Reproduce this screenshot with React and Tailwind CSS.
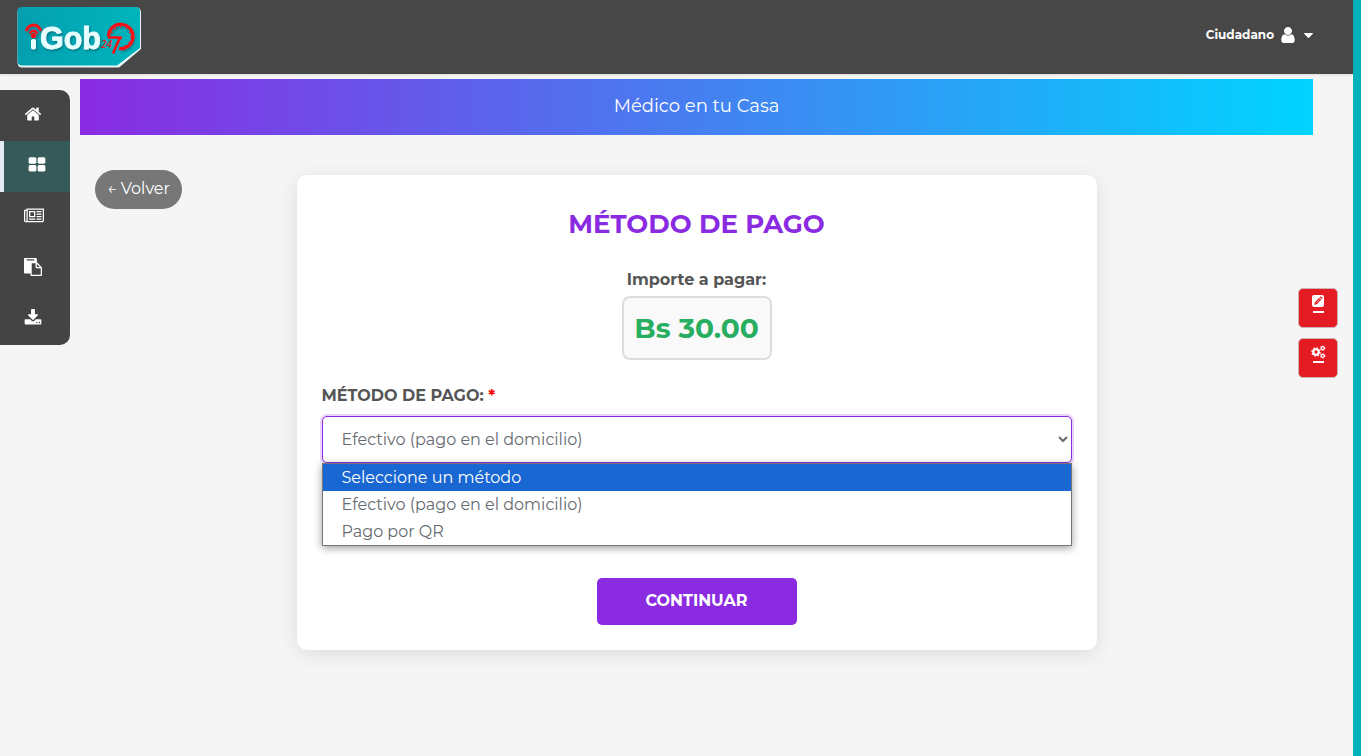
import { useState } from "react";

const NAV_ITEMS = [
  {
    label: "Inicio",
    viewBox: "0 0 1792 1792",
    size: "w-[18px] h-[18px]",
    d: "M1472 992v480q0 26-19 45t-45 19h-384v-384h-256v384h-384q-26 0-45-19t-19-45v-480q0-1 .5-3t.5-3l575-474 575 474q1 2 1 6zm223-69l-62 74q-8 9-21 11h-3q-13 0-21-7l-692-577-692 577q-12 8-24 7-13-2-21-11l-62-74q-8-10-7-23.5t11-21.5l719-599q32-26 76-26t76 26l244 204v-195q0-14 9-23t23-9h192q14 0 23 9t9 23v408l219 182q10 8 11 21.5t-7 23.5z",
  },
  {
    label: "Servicios",
    active: true,
    viewBox: "0 0 1792 1792",
    size: "w-[18px] h-[18px]",
    d: "M832 1024v384q0 52-38 90t-90 38h-512q-52 0-90-38t-38-90v-384q0-52 38-90t90-38h512q52 0 90 38t38 90zm0-768v384q0 52-38 90t-90 38h-512q-52 0-90-38t-38-90v-384q0-52 38-90t90-38h512q52 0 90 38t38 90zm896 768v384q0 52-38 90t-90 38h-512q-52 0-90-38t-38-90v-384q0-52 38-90t90-38h512q52 0 90 38t38 90zm0-768v384q0 52-38 90t-90 38h-512q-52 0-90-38t-38-90v-384q0-52 38-90t90-38h512q52 0 90 38t38 90z",
  },
  {
    label: "Noticias",
    viewBox: "0 0 2048 1792",
    size: "w-5 h-[18px]",
    d: "M1024 512h-384v384h384v-384zm128 640v128h-640v-128h640zm0-768v640h-640v-640h640zm640 768v128h-512v-128h512zm0-256v128h-512v-128h512zm0-256v128h-512v-128h512zm0-256v128h-512v-128h512zm-1536 960v-960h-128v960q0 26 19 45t45 19 45-19 19-45zm1664 0v-1088h-1536v1088q0 33-11 64h1483q26 0 45-19t19-45zm128-1216v1216q0 80-56 136t-136 56h-1664q-80 0-136-56t-56-136v-1088h256v-128h1792z",
  },
  {
    label: "Documentos",
    viewBox: "0 0 1792 1792",
    size: "w-[18px] h-[18px]",
    d: "M768 1664h896v-640h-416q-40 0-68-28t-28-68v-416h-384v1152zm256-1440v-64q0-13-9.5-22.5t-22.5-9.5h-704q-13 0-22.5 9.5t-9.5 22.5v64q0 13 9.5 22.5t22.5 9.5h704q13 0 22.5-9.5t9.5-22.5zm256 672h299l-299-299v299zm512 128v672q0 40-28 68t-68 28h-960q-40 0-68-28t-28-68v-160h-544q-40 0-68-28t-28-68v-1344q0-40 28-68t68-28h1088q40 0 68 28t28 68v328q21 13 36 28l408 408q28 28 48 76t20 88z",
  },
  {
    label: "Descargas",
    viewBox: "0 0 1792 1792",
    size: "w-[18px] h-[18px]",
    d: "M1344 1344q0-26-19-45t-45-19-45 19-19 45 19 45 45 19 45-19 19-45zm256 0q0-26-19-45t-45-19-45 19-19 45 19 45 45 19 45-19 19-45zm128-224v320q0 40-28 68t-68 28h-1472q-40 0-68-28t-28-68v-320q0-40 28-68t68-28h465l135 136q58 56 136 56t136-56l136-136h464q40 0 68 28t28 68zm-325-569q17 41-14 70l-448 448q-18 19-45 19t-45-19l-448-448q-31-29-14-70 17-39 59-39h256v-448q0-26 19-45t45-19h256q26 0 45 19t19 45v448h256q42 0 59 39z",
  },
];

const METHODS = [
  { value: "", label: "Seleccione un método" },
  { value: "efectivo", label: "Efectivo (pago en el domicilio)" },
  { value: "qr", label: "Pago por QR" },
];

function Logo() {
  return (
    <svg viewBox="0 0 126 62" className="h-[62px] w-[126px]" role="img" aria-label="iGob 24/7">
      <defs>
        <linearGradient id="logo-fill" x1="0" y1="0" x2="1" y2="0">
          <stop offset="0" stopColor="#049fb0" />
          <stop offset="1" stopColor="#00b5bd" />
        </linearGradient>
        <filter id="logo-shadow" x="-10%" y="-20%" width="130%" height="150%">
          <feDropShadow dx="1" dy="1.5" stdDeviation="0.8" floodColor="#035b66" floodOpacity="0.7" />
        </filter>
      </defs>
      <path d="M6 1.5H120Q125 1.500 125 6.500V43L103 61.500H6Q1.500 61.500 1.500 56V6Q1.500 1.500 6 1.500Z" fill="#e9f6f7" />
      <path d="M6 1H119.500Q124 1 124 5.500V42L101 59.500H6.500Q1.500 59.500 1.500 54.500V5.500Q1.500 1 6 1Z" fill="url(#logo-fill)" />
      <g filter="url(#logo-shadow)">
        <g fill="none" stroke="#fb0d17">
          <path d="M10 25Q12.500 19 17.500 19T25 25" strokeWidth="3" />
          <path d="M13.500 27.500Q17.500 22 21.500 27.500" strokeWidth="2.300" />
        </g>
        <circle cx="17.500" cy="29.500" r="2.600" fill="#fb0d17" />
        <rect x="15" y="33" width="5" height="10.500" rx="2" fill="#e8ffff" />
        <text x="24" y="43" fill="#e8ffff" stroke="#e8ffff" strokeWidth="0.8" fontFamily="Liberation Sans, sans-serif" fontWeight="700" fontSize="30.500">
          Gob
        </text>
        <path d="M92.500 30.500A12.200 12.200 0 1 1 103 42.500" fill="none" stroke="#fb0d17" strokeWidth="3.200" />
        <path d="M104.700 19v2.500M111 21l-1.200 2M115 25.500l-2 1.200M116.500 31h-2.500M114.500 37l-2-1.200M110 41l-1-2M98.500 21.500l1.200 2M94.500 25.500l2 1.200" stroke="#fb0d17" strokeWidth="1.200" />
      </g>
      <text x="85" y="41.500" fill="#dd1c28" fontFamily="Open Sans, sans-serif" fontStyle="italic" fontWeight="600" fontSize="10">24</text>
      <path d="M92 31.500H104L97 47.500" fill="none" stroke="#fb0d17" strokeWidth="2.600" />
      <path d="M102 34.500L106 31.500" fill="none" stroke="#fb0d17" strokeWidth="1.500" />
    </svg>
  );
}

function Header() {
  return (
    <header className="flex h-[74px] items-start justify-between bg-[#474747] pl-4 pr-10 pt-1.5 shadow-[0_1px_2px_rgba(0,0,0,0.1)]">
      <a href="#inicio"><Logo /></a>
      <button type="button" className="mt-[19px] flex h-5 items-center text-xs font-bold text-white">
        Ciudadano
        <svg viewBox="0 0 1280 1536" className="ml-[7px] h-4 w-3.5 fill-white" aria-hidden="true">
          <path transform="translate(-256 -128)" d="M1536 1399q0 109-62.500 187t-150.500 78h-854q-88 0-150.500-78t-62.500-187q0-85 8.500-160.500t31.500-152 58.500-131 94-89 134.500-34.500q131 128 313 128t313-128q76 0 134.500 34.500t94 89 58.500 131 31.500 152 8.500 160.500zm-256-887q0 159-112.500 271.500t-271.500 112.500-271.500-112.500-112.500-271.500 112.500-271.500 271.500-112.500 271.500 112.500 112.500 271.500z" />
        </svg>
        <svg viewBox="0 0 9 5" className="ml-[9px] h-[5px] w-[9px] fill-white" aria-hidden="true">
          <path d="M.5 0h8q.7.2.2.9L5 4.700q-.5.400-1 0L.3.900Q-.2.200.5 0z" />
        </svg>
      </button>
    </header>
  );
}

function Sidebar() {
  return (
    <nav aria-label="Principal" className="mt-4 w-[70px] shrink-0 self-start overflow-hidden rounded-r-[10px] bg-[#444444]">
      {NAV_ITEMS.map((item) => (
        <a
          key={item.label}
          href="#seccion"
          aria-label={item.label}
          className={
            item.active
              ? "flex h-[51px] items-center border-l-4 border-[#e4e9f0] bg-[#365a5a] pb-1 pl-6"
              : "flex h-[51px] items-center pb-1 pl-6"
          }
        >
          <svg viewBox={item.viewBox} className={`${item.size} fill-white`} aria-hidden="true">
            <path d={item.d} />
          </svg>
        </a>
      ))}
    </nav>
  );
}

function PaymentMethod() {
  const [method, setMethod] = useState("efectivo");
  return (
    <div className="mt-6">
      <label htmlFor="metodo" className="block text-base leading-6 font-bold text-[#555555]">
        MÉTODO DE PAGO: <span className="text-[#ff0000]">*</span>
      </label>
      <div className="relative mt-2">
        <select
          id="metodo"
          value={method}
          onChange={(e) => setMethod(e.target.value)}
          className="block h-[47px] w-full rounded-[5px] border border-[#8a2be2] bg-white px-[15px] text-base text-[#666b70] shadow-[0_0_0_2px_rgba(138,43,226,0.2)] outline-none"
        >
          {METHODS.map((m) => (
            <option key={m.label} value={m.value}>{m.label}</option>
          ))}
        </select>
        <ul role="listbox" aria-label="Opciones de pago" className="absolute inset-x-0 top-full border border-[#767676] bg-white text-base leading-[27px] text-[#666b70] shadow-[0_2px_8px_rgba(0,0,0,0.4)]">
          {METHODS.map((m, i) => (
            <li
              key={m.label}
              role="option"
              aria-selected={m.value === method}
              onClick={() => setMethod(m.value)}
              className={i === 0 ? "bg-[#1967d2] px-[19px] text-white" : "px-[19px]"}
            >
              {m.label}
            </li>
          ))}
        </ul>
      </div>
    </div>
  );
}

function Gear({ x, y, r, teeth }) {
  const circumference = 2 * Math.PI * r;
  const step = circumference / (teeth * 2);
  return (
    <g transform={`translate(${x} ${y})`} fill="none" stroke="#fff">
      <circle r={r * 0.72} strokeWidth={r * 0.56} />
      <circle r={r} strokeWidth={r * 0.5} strokeDasharray={`${step} ${step}`} />
    </g>
  );
}

function QuickActions() {
  const button = "flex size-10 flex-col items-center rounded-[5px] border border-[#c9b4b6] bg-[#e51b24] pt-1.5 text-white";
  return (
    <div className="absolute top-[288px] right-[15px] flex flex-col gap-2.5">
      <button type="button" aria-label="Editar" className={button}>
        <svg viewBox="0 0 12 12" className="size-3" aria-hidden="true">
          <rect width="12" height="12" rx="2" fill="#fff" />
          <path d="M2.200 9.800L2.800 7.200L7.200 2.800L9.200 4.800L4.800 9.200ZM7.800 2.200L8.500 1.600Q9 1.300 9.400 1.700L10.300 2.600Q10.700 3 10.300 3.500L9.800 4.200Z" fill="#e51b24" />
          <path d="M4.500 7.500L7.500 4.500" stroke="#fff" strokeWidth=".6" />
        </svg>
        <span className="mt-1 h-0.5 w-[11px] bg-white" />
      </button>
      <button type="button" aria-label="Configuración" className={button}>
        <svg viewBox="0 0 15 14" className="h-3.5 w-[15px]" aria-hidden="true">
          <Gear x={5} y={7} r={3.8} teeth={8} />
          <Gear x={11.7} y={3.2} r={2.1} teeth={6} />
          <Gear x={11.7} y={10.800} r={2.1} teeth={6} />
        </svg>
        <span className="mt-0.5 h-0.5 w-[11px] bg-white" />
      </button>
    </div>
  );
}

export default function App() {
  return (
    <div className="relative min-h-screen border-r-8 border-[#00b2ba] bg-[#f5f5f5] font-['Montserrat','Inter',sans-serif]">
      <Header />
      <div className="flex">
        <Sidebar />
        <main className="mt-[5px] mr-10 ml-2.5 min-w-0 flex-1">
          <h1 className="bg-[linear-gradient(to_right,#8a2be2,#00d4ff)] pt-[13px] pb-[15px] text-center text-lg leading-7 text-white">
            Médico en tu Casa
          </h1>
          <div className="grid grid-cols-[1fr_minmax(0,800px)_1fr] px-[15px]">
            <div className="pt-[35px]">
              <button type="button" className="h-[39px] rounded-full bg-[#777777] px-3 pb-0.5 text-base whitespace-nowrap text-white">
                ← Volver
              </button>
            </div>
            <section className="mt-10 rounded-[10px] bg-white p-[25px] shadow-[0_4px_20px_rgba(0,0,0,0.1)]">
              <h2 className="text-center text-[26px] leading-[48px] font-bold text-[#8a2be2]">MÉTODO DE PAGO</h2>
              <div className="mt-5 flex flex-col items-center">
                <p className="text-base leading-6 font-bold text-[#555555]">Importe a pagar:</p>
                <p className="mt-1 flex h-16 min-w-[150px] items-center justify-center rounded-lg border-2 border-[#dddddd] bg-[#f9f9f9] px-2.5 text-[28px] font-bold text-[#27ae60]">
                  Bs 30.00
                </p>
              </div>
              <PaymentMethod />
              <div className="mt-[115px] flex justify-center">
                <button type="button" className="h-[47px] w-[200px] rounded-[5px] bg-[#8a2be2] pb-0.5 text-base font-bold text-white">
                  CONTINUAR
                </button>
              </div>
            </section>
          </div>
        </main>
      </div>
      <QuickActions />
    </div>
  );
}
